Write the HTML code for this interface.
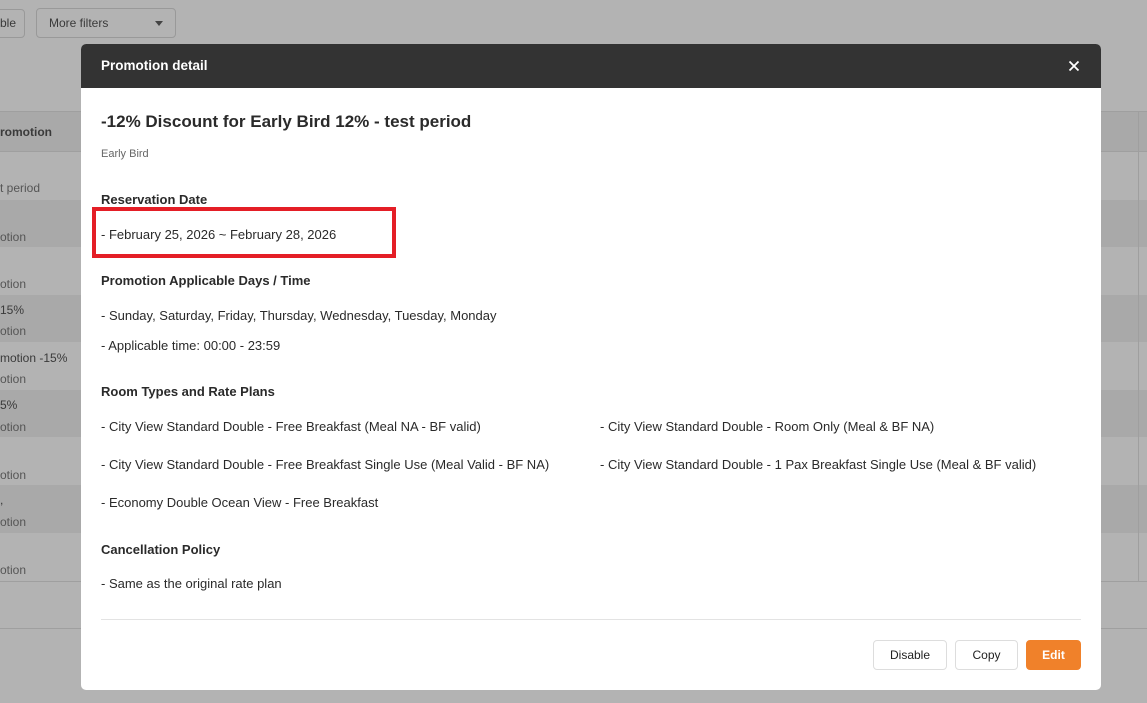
<!DOCTYPE html>
<html><head><meta charset="utf-8"><style>
*{margin:0;padding:0;box-sizing:border-box}
body{width:1147px;height:703px;overflow:hidden;background:#b3b3b3;font-family:"Liberation Sans",sans-serif;position:relative;color:#222}
.a{position:absolute;white-space:nowrap}
.bg{color:#3a3a3a;font-size:12px}
.m{position:absolute;left:81px;top:44px;width:1020px;height:646px;background:#fff;border-radius:5px;overflow:hidden}
.hd{height:44px;background:#333;color:#fff;font-weight:bold;font-size:13.5px;padding:14px 20px}
.t{font-size:13px;color:#2a2a2a}
.h{font-size:13px;font-weight:bold;color:#2a2a2a}
.btn{position:absolute;top:596px;height:30px;border:1px solid #ddd;border-radius:4px;font-size:12px;text-align:center;line-height:28px;color:#222;background:#fff}
</style></head><body>
<div class="a" style="left:-6px;top:9px;width:31px;height:29px;border:1px solid #999;border-radius:4px"></div>
<div class="a bg" style="left:0;top:16px">ble</div>
<div class="a" style="left:36px;top:8px;width:140px;height:30px;border:1px solid #999;border-radius:4px"></div>
<div class="a bg" style="left:49px;top:16px">More filters</div>
<div class="a" style="left:155px;top:21px;border:4px solid transparent;border-top:5px solid #444"></div>
<div class="a" style="left:0;top:111px;width:1147px;height:41px;background:#a9a9a9;border-top:1px solid #9f9f9f;border-bottom:1px solid #9f9f9f"></div>
<div class="a" style="left:0;top:200px;width:1147px;height:47px;background:#a9a9a9"></div>
<div class="a" style="left:0;top:295px;width:1147px;height:47px;background:#a9a9a9"></div>
<div class="a" style="left:0;top:390px;width:1147px;height:47px;background:#a9a9a9"></div>
<div class="a" style="left:0;top:485px;width:1147px;height:48px;background:#a9a9a9"></div>
<div class="a" style="left:0;top:581px;width:1147px;height:1px;background:#9f9f9f"></div>
<div class="a" style="left:0;top:628px;width:1147px;height:1px;background:#9f9f9f"></div>
<div class="a" style="left:1138px;top:111px;width:1px;height:470px;background:#9f9f9f"></div>
<div class="a bg" style="left:0;top:125px;font-weight:bold">romotion</div>
<div class="a bg" style="left:0;top:181px;color:#555">t period</div>
<div class="a bg" style="left:0;top:230px;color:#555">otion</div>
<div class="a bg" style="left:0;top:277px;color:#555">otion</div>
<div class="a bg" style="left:0;top:303px">15%</div>
<div class="a bg" style="left:0;top:324px;color:#555">otion</div>
<div class="a bg" style="left:0;top:351px">motion -15%</div>
<div class="a bg" style="left:0;top:372px;color:#555">otion</div>
<div class="a bg" style="left:0;top:398px">5%</div>
<div class="a bg" style="left:0;top:420px;color:#555">otion</div>
<div class="a bg" style="left:0;top:468px;color:#555">otion</div>
<div class="a bg" style="left:0;top:493px">,</div>
<div class="a bg" style="left:0;top:515px;color:#555">otion</div>
<div class="a bg" style="left:0;top:563px;color:#555">otion</div>

<div class="m">
<div class="hd">Promotion detail</div>
<svg class="a" style="left:987px;top:16px" width="12" height="12" viewBox="0 0 12 12"><path d="M1.5 1.5L10.5 10.5M10.5 1.5L1.5 10.5" stroke="#fff" stroke-width="1.8"/></svg>
<div class="a" style="left:20px;top:68px;font-size:17px;font-weight:bold;color:#2a2a2a">-12% Discount for Early Bird 12% - test period</div>
<div class="a" style="left:20px;top:104px;font-size:11px;color:#666">Early Bird</div>
<div class="a h" style="left:20px;top:148px">Reservation Date</div>
<div class="a" style="left:11px;top:163px;width:304px;height:51px;border:4px solid #e41e26"></div>
<div class="a t" style="left:20px;top:183px">- February 25, 2026 ~ February 28, 2026</div>
<div class="a h" style="left:20px;top:229px">Promotion Applicable Days / Time</div>
<div class="a t" style="left:20px;top:264px">- Sunday, Saturday, Friday, Thursday, Wednesday, Tuesday, Monday</div>
<div class="a t" style="left:20px;top:294px">- Applicable time: 00:00 - 23:59</div>
<div class="a h" style="left:20px;top:340px">Room Types and Rate Plans</div>
<div class="a t" style="left:20px;top:375px">- City View Standard Double - Free Breakfast (Meal NA - BF valid)</div>
<div class="a t" style="left:519px;top:375px">- City View Standard Double - Room Only (Meal &amp; BF NA)</div>
<div class="a t" style="left:20px;top:413px">- City View Standard Double - Free Breakfast Single Use (Meal Valid - BF NA)</div>
<div class="a t" style="left:519px;top:413px">- City View Standard Double - 1 Pax Breakfast Single Use (Meal &amp; BF valid)</div>
<div class="a t" style="left:20px;top:451px">- Economy Double Ocean View - Free Breakfast</div>
<div class="a h" style="left:20px;top:498px">Cancellation Policy</div>
<div class="a t" style="left:20px;top:532px">- Same as the original rate plan</div>
<div class="a" style="left:20px;top:575px;width:980px;height:1px;background:#e3e3e3"></div>
<div class="btn" style="left:792px;width:74px">Disable</div>
<div class="btn" style="left:874px;width:63px">Copy</div>
<div class="btn" style="left:945px;width:55px;background:#f0812a;border-color:#f0812a;color:#fff;font-weight:bold">Edit</div>
</div>
</body></html>
